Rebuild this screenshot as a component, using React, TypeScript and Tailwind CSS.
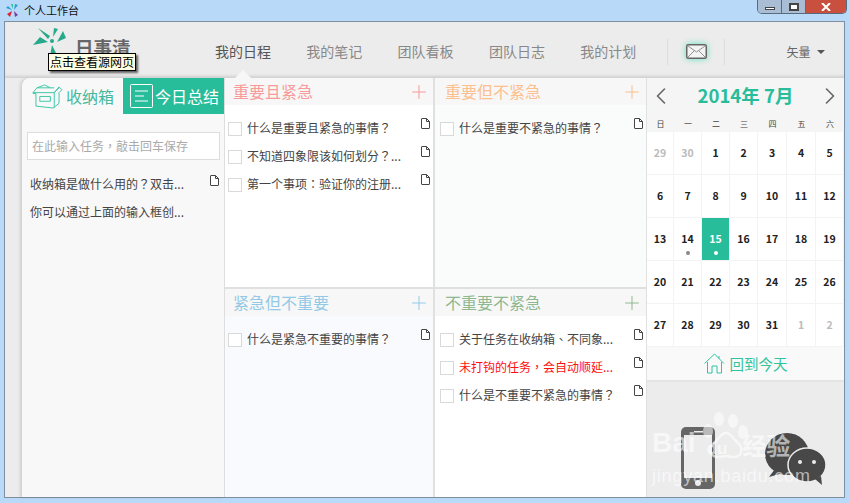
import React from "react";
import { ChevronLeft, ChevronRight, Plus } from "lucide-react";

const FONT = { fontFamily: '"Noto Sans CJK SC", "Liberation Sans", sans-serif' };
const TC = { fontFamily: '"Noto Sans CJK TC", sans-serif' };

function Txt({ s }: { s: string }) {
  const parts = s.split(/([？，、：])/);
  return (
    <>
      {parts.map((p, i) => (i % 2 === 1 ? <span key={i} style={TC}>{p}</span> : <React.Fragment key={i}>{p}</React.Fragment>))}
    </>
  );
}

function FileIcon() {
  return (
    <svg width="9" height="11" viewBox="0 0 9 11" className="shrink-0">
      <path d="M1 .5h4.500L8.500 3.500V10a.5.5 0 0 1-.5.500H1A.5.5 0 0 1 .5 10V1A.5.5 0 0 1 1 .5z" fill="#fff" stroke="#444" strokeWidth="1" />
      <path d="M5.500 .5V3.500H8.500" fill="none" stroke="#444" strokeWidth="1" />
    </svg>
  );
}

function Task({ text, red }: { text: string; red?: boolean }) {
  return (
    <div className="flex h-[28px] items-start">
      <span className="mt-[8px] h-[14px] w-[14px] shrink-0 border border-[#d9d9d9] bg-white" />
      <span className={`ml-[5px] w-[162px] truncate text-[12px] leading-[28px] ${red ? "text-[#ff1010]" : "text-[#444444]"}`}><Txt s={text} /></span>
      <span className="ml-auto mt-[4px]"><FileIcon /></span>
    </div>
  );
}

function Quad({ title, color, bg, right, tasks }: { title: string; color: string; bg: string; right?: boolean; tasks: { t: string; red?: boolean }[] }) {
  return (
    <div className={`flex flex-col ${bg}`}>
      <div className={`flex h-[27px] items-center justify-between bg-[#f7f7f7] pr-[3px] ${right ? "pl-[10px]" : "pl-[8px]"}`} style={{ color }}>
        <span className="text-[16px] leading-[27px]">{title}</span>
        <Plus size={22} strokeWidth={1.100} />
      </div>
      <div className={`flex flex-col pr-[3px] pt-[9px] ${right ? "pl-[5px]" : "pl-[3px]"}`}>
        {tasks.map((k) => <Task key={k.t} text={k.t} red={k.red} />)}
      </div>
    </div>
  );
}

const weeks: { d: number; m?: boolean; dot?: boolean; on?: boolean }[][] = [
  [{ d: 29, m: true }, { d: 30, m: true }, { d: 1 }, { d: 2 }, { d: 3 }, { d: 4 }, { d: 5 }],
  [{ d: 6 }, { d: 7 }, { d: 8 }, { d: 9 }, { d: 10 }, { d: 11 }, { d: 12 }],
  [{ d: 13 }, { d: 14, dot: true }, { d: 15, on: true, dot: true }, { d: 16 }, { d: 17 }, { d: 18 }, { d: 19 }],
  [{ d: 20 }, { d: 21 }, { d: 22 }, { d: 23 }, { d: 24 }, { d: 25 }, { d: 26 }],
  [{ d: 27 }, { d: 28 }, { d: 29 }, { d: 30 }, { d: 31 }, { d: 1, m: true }, { d: 2, m: true }],
];
const COLS = "grid grid-cols-[27px_28px_28px_28px_29px_29px_28px]";

function Calendar() {
  return (
    <div className="flex w-[197px] shrink-0 flex-col bg-white">
      <div className="flex h-[38px] items-center justify-between bg-[#f5f5f5] pb-[3px] text-[#666666]">
        <ChevronLeft size={28} strokeWidth={1.400} />
        <span className="text-[18.500px] font-bold text-[#27bd9b]">2014年 7月</span>
        <ChevronRight size={28} strokeWidth={1.400} />
      </div>
      <div className={`${COLS} h-[16px] bg-[#f5f5f5]`}>
        {["日", "一", "二", "三", "四", "五", "六"].map((w) => (
          <span key={w} className="text-center text-[8px] leading-[16px] text-[#444444]">{w}</span>
        ))}
      </div>
      {weeks.map((row, i) => (
        <div key={i} className={`${COLS} h-[43px] border-b border-[#f3f3f3]`}>
          {row.map((c, j) => (
            <div
              key={j}
              className={`relative flex items-center justify-center border-r border-[#f3f3f3] text-[10.500px] font-bold ${c.on ? "bg-[#27bd9b] text-white" : c.m ? "text-[#bbbbbb]" : "text-[#222222]"}`}
            >
              {c.d}
              {c.dot && <span className={`absolute bottom-[5px] h-[4px] w-[4px] rounded-full ${c.on ? "bg-white" : "bg-[#888888]"}`} />}
            </div>
          ))}
        </div>
      ))}
      <div className="flex h-[35px] items-center justify-center gap-[5px] border-b-2 border-[#e4e4e4] bg-[#f9f9f9] text-[14.500px] text-[#2fc4a0]">
        <svg width="21" height="21" viewBox="0 0 21 21" fill="none" stroke="#2fc4a0" strokeWidth="1">
          <path d="M.5 10.500 10.500 1l9.500 9.500M3.500 9v11h4.500v-7h5v7h4.500V9M15 3v2.500" />
        </svg>
        <span>回到今天</span>
      </div>
      <div className="flex flex-1 items-start bg-[#ececec] pl-[34px] pt-[45px]">
        <svg width="34" height="62" viewBox="0 0 34 62" className="shrink-0">
          <rect width="34" height="62" rx="5" fill="#666666" />
          <rect x="3" y="8" width="28" height="43" fill="#ececec" />
          <circle cx="17" cy="56" r="3" fill="#ececec" />
          <rect x="13" y="4" width="9" height="1.500" fill="#ececec" />
        </svg>
        <svg width="62" height="52" viewBox="0 0 62 52" className="ml-[50px] mt-[6px] shrink-0">
          <ellipse cx="22" cy="21" rx="22" ry="21" fill="#484848" />
          <path d="M10 36l-6 8 14-4z" fill="#484848" />
          <ellipse cx="42" cy="32" rx="19" ry="17" fill="#484848" stroke="#ececec" strokeWidth="1.500" />
          <path d="M50 46l7 6-1-9z" fill="#484848" />
          <circle cx="35" cy="29" r="2" fill="#ececec" />
          <circle cx="49" cy="29" r="2" fill="#ececec" />
        </svg>
      </div>
    </div>
  );
}

export default function App() {
  const tabs = ["我的日程", "我的笔记", "团队看板", "团队日志", "我的计划"];
  return (
    <div className="relative flex h-[503px] w-[849px] flex-col overflow-hidden bg-[#b9d9f8]" style={FONT}>
      {/* title bar */}
      <div className="flex h-[21px] shrink-0 items-center pl-[6px]">
        <svg width="14" height="15" viewBox="0 0 14 15">
          <path d="M6 7 0 5l2-2zM8 7l1-6 3 1z" fill="#2a9fd6" />
          <path d="M7 6 5 1l2 0z" fill="#2fbf9f" />
          <path d="M6 8l-5 3 3 3z" fill="#d8262c" />
          <path d="M8 8l4 4-3 2z" fill="#7a3fa0" />
        </svg>
        <span className="ml-[4px] text-[11px] text-[#111111]">个人工作台</span>
      </div>
      {/* window buttons */}
      <div className="absolute left-[757px] top-0 flex h-[14px] w-[90px] overflow-hidden rounded-b-[5px] border border-t-0 border-[#5a6a7c]">
        <span className="flex w-[24px] items-end justify-center border-r border-[#5a6a7c] bg-[#a9bdd4] pb-[3px]"><span className="h-[3px] w-[10px] border border-[#444444] bg-white" /></span>
        <span className="flex w-[24px] items-center justify-center border-r border-[#5a6a7c] bg-[#a9bdd4]"><span className="h-[8px] w-[10px] border-2 border-[#444444] bg-white" /></span>
        <span className="flex flex-1 items-center justify-center bg-[#c9503f]">
          <svg width="10" height="8" viewBox="0 0 10 8"><path d="M1 0l8 8M9 0 1 8" stroke="#fff" strokeWidth="2" /></svg>
        </span>
      </div>

      {/* client */}
      <div className="ml-[4px] mr-[4px] flex h-[477px] flex-col border border-[#7f8f9f] bg-[#ececec]">
        {/* header */}
        <div className="relative flex h-[56px] shrink-0 items-center pt-[3px] shadow-[inset_0_-3px_3px_-1px_#d0d0d0]">
          <div className="flex w-[190px] items-start pl-[27px]">
            <svg width="36" height="32" viewBox="0 0 36 32" className="-mt-[15px] shrink-0">
              <path d="M16 12 6 1l12 8zM21 10l1-9 4 1zM16 15 1 18l7-8zM20 18l-2 11 6-3zM25 15l9-4-3-7z" fill="#27a98b" />
              <circle cx="20" cy="14" r="2" fill="#27a98b" />
            </svg>
            <span className="-mt-[9px] ml-[7px] text-[18.500px] font-bold leading-[28px] text-[#666666]">日事清</span>
          </div>
          <nav className="flex">
            {tabs.map((t, i) => (
              <span key={t} className={`w-[91.300px] pl-[20px] text-[14px] ${i === 0 ? "text-[#555555]" : "text-[#888888]"}`}>{t}</span>
            ))}
          </nav>
          <span className="ml-[16px] h-[26px] w-px bg-[#dddddd]" />
          <span className="ml-[18px] mr-[17px] flex h-[15px] w-[21px] items-center justify-center">
            <svg width="21" height="15" viewBox="0 0 21 15" className="overflow-visible" style={{ filter: "drop-shadow(0 0 3px #5fe0bd)" }}>
              <rect x=".75" y=".75" width="19.500" height="13.500" rx="1.500" fill="#f3f3f3" stroke="#666666" strokeWidth="1.500" />
              <path d="M2 2l8.500 6L19 2M2 13l6-6M19 13l-6-6" fill="none" stroke="#777777" strokeWidth=".8" />
            </svg>
          </span>
          <span className="h-[26px] w-px bg-[#dddddd]" />
          <span className="ml-[61px] text-[12px] text-[#666666]">矢量</span>
          <span className="ml-[6px] h-0 w-0 border-x-[4px] border-t-[4px] border-x-transparent border-t-[#555555]" />
          {/* active tab pointer */}
          <span className="absolute bottom-0 left-[230px] h-0 w-0 border-x-[8px] border-b-[8px] border-x-transparent border-b-[#f7f7f7]" />
          {/* tooltip */}
          <div className="absolute left-[43px] top-[31px] z-10 h-[18px] whitespace-nowrap border border-black bg-[#ffffe1] px-[1px] text-[12px] leading-[16px] text-black shadow-[2px_2px_2px_rgba(0,0,0,0.6)]">点击查看源网页</div>
        </div>

        {/* body */}
        <div className="flex min-h-0 flex-1 pl-[17px]">
          {/* inbox */}
          <div className="flex w-[203px] shrink-0 flex-col overflow-hidden rounded-tl-[8px] border-r border-[#dedede] bg-[#f8f8f8] shadow-[-2px_0_3px_rgba(0,0,0,0.12)]">
            <div className="flex h-[36px] shrink-0">
              <div className="flex w-[101px] items-center pl-[10px] text-[16px] text-[#45b89d]">
                <svg width="31" height="26" viewBox="0 0 32 27" fill="none" stroke="#3cc7a5" strokeWidth="1" className="shrink-0">
                  <path d="M1 10h22l5-5M1 10l4-5h18M5 5l8-3 6 3M1 10v1h3v13l18 2 6-5V10l3-3-3-3-5 6v16M8 14h11v5H8z" />
                </svg>
                <span className="ml-[3px]">收纳箱</span>
              </div>
              <div className="flex flex-1 items-center bg-[#27bd9b] pl-[7px] text-[16px] text-white">
                <svg width="23" height="24" viewBox="0 0 23 24" fill="none" stroke="#ffffff" strokeWidth="1" className="shrink-0">
                  <rect x=".5" y=".5" width="22" height="23" rx="1" />
                  <path d="M5 7h13M5 12h9M5 17h13" />
                </svg>
                <span className="ml-[2px]">今日总结</span>
              </div>
            </div>
            <div className="ml-[5px] mr-[4px] mt-[18px] flex h-[28px] shrink-0 items-center border border-[#dddddd] bg-white pl-[4px] text-[12px] text-[#aaaaaa]"><Txt s="在此输入任务，敲击回车保存" /></div>
            <div className="mt-[10px] flex flex-col pl-[8px] pr-[3px]">
              <div className="flex h-[28px] items-start justify-between">
                <span className="text-[12px] leading-[28px] text-[#444444]"><Txt s="收纳箱是做什么用的？双击..." /></span>
                <span className="mr-[2px] mt-[5px]"><FileIcon /></span>
              </div>
              <span className="text-[12px] leading-[28px] text-[#444444]">你可以通过上面的输入框创...</span>
            </div>
          </div>

          {/* quadrants */}
          <div className="grid w-[422px] shrink-0 grid-cols-[208px_211px] grid-rows-[209px_1fr] gap-[2px] bg-[#e0e0e0]">
            <Quad title="重要且紧急" color="#f79a9a" bg="bg-white" tasks={[{ t: "什么是重要且紧急的事情？" }, { t: "不知道四象限该如何划分？..." }, { t: "第一个事项：验证你的注册..." }]} />
            <Quad title="重要但不紧急" color="#fbc08e" bg="bg-[#fafbfb]" right tasks={[{ t: "什么是重要不紧急的事情？" }]} />
            <Quad title="紧急但不重要" color="#93c9e6" bg="bg-[#f9fafd]" tasks={[{ t: "什么是紧急不重要的事情？" }]} />
            <Quad title="不重要不紧急" color="#8fb88f" bg="bg-white" right tasks={[{ t: "关于任务在收纳箱、不同象..." }, { t: "未打钩的任务，会自动顺延...", red: true }, { t: "什么是不重要不紧急的事情？" }]} />
          </div>

          <Calendar />
        </div>
      </div>

      {/* watermark */}
      <div className="pointer-events-none absolute left-[652px] top-[412px] text-white/60" style={{ fontFamily: '"Liberation Sans", sans-serif' }}>
        <svg width="56" height="50" viewBox="0 0 56 50" className="absolute left-[48px] top-0" fill="none">
          <ellipse cx="8" cy="19" rx="5" ry="7" fill="rgba(255,255,255,0.55)" />
          <ellipse cx="19" cy="7" rx="5" ry="7" fill="rgba(255,255,255,0.55)" />
          <ellipse cx="33" cy="9" rx="5" ry="7" fill="rgba(255,255,255,0.55)" />
          <ellipse cx="43" cy="20" rx="5" ry="7" fill="rgba(255,255,255,0.55)" />
          <path d="M26 21c-6 0-7 6-12 10-5 4-5 13 3 14 4 .5 6-1 9-1s5 1.500 9 1c8-1 8-10 3-14-5-4-6-10-12-10z" stroke="rgba(255,255,255,0.6)" strokeWidth="2.500" />
        </svg>
        <div className="flex h-[20px] items-end whitespace-nowrap pt-0 text-[28px] font-bold leading-none" style={{ marginTop: 25 }}>
          <span>Bai</span>
          <span className="ml-[11px] text-[17px]">du</span>
          <span className="ml-[15px] text-[24px]" style={FONT}>经验</span>
        </div>
        <div className="mt-[10px] whitespace-nowrap text-[18px] leading-none tracking-[0.8px]">jingyan.baidu.com</div>
      </div>
    </div>
  );
}
